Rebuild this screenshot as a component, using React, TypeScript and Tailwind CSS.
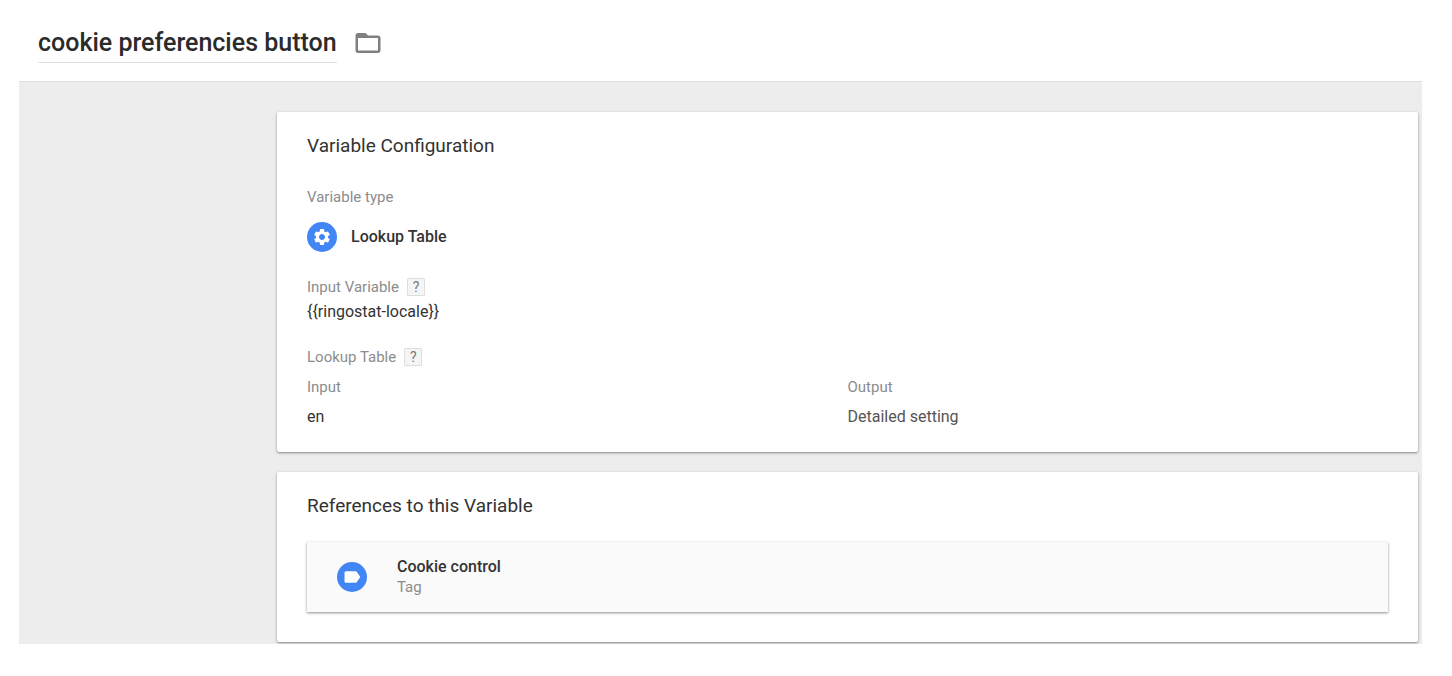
import type { ReactNode } from "react";
import { MdFolderOpen, MdLabel, MdSettings } from "react-icons/md";

type CardProps = {
	title: string;
	children: ReactNode;
};

function Card({ title, children }: CardProps) {
	return (
		<section className="rounded-xs bg-white px-[30px] pt-6 pb-[25px] shadow-[0_1px_2px_rgba(0,0,0,0.35),0_1px_4px_rgba(0,0,0,0.12)]">
			<h2 className="text-[19px] leading-5 text-[#333]">{title}</h2>
			{children}
		</section>
	);
}

function Label({ children }: { children: ReactNode }) {
	return <div className="text-[15px] leading-5 text-[#8c8c8c]">{children}</div>;
}

function HelpButton({ topic }: { topic: string }) {
	return (
		<button
			type="button"
			aria-label={`Help: ${topic}`}
			className="h-[18px] w-[18px] rounded-[1px] border border-[#dedede] bg-[#f5f5f5] text-center text-sm leading-4 text-[#777]"
		>
			?
		</button>
	);
}

function RoundIcon({ children }: { children: ReactNode }) {
	return (
		<span className="flex h-[30px] w-[30px] shrink-0 items-center justify-center rounded-full bg-[#4285f4] text-white">
			{children}
		</span>
	);
}

const rows = [{ input: "en", output: "Detailed setting" }];

function LookupTable() {
	return (
		<table className="mt-2.5 w-full table-fixed text-left">
			<thead className="text-[15px] leading-5 text-[#8c8c8c]">
				<tr>
					<th className="w-1/2 p-0 font-normal">Input</th>
					<th className="w-1/2 p-0 font-normal">Output</th>
				</tr>
			</thead>
			<tbody className="text-base leading-5">
				{rows.map((row) => (
					<tr key={row.input}>
						<td className="p-0 pt-2.5 text-[#333]">{row.input}</td>
						<td className="p-0 pt-2.5 text-[#555]">{row.output}</td>
					</tr>
				))}
			</tbody>
		</table>
	);
}

export default function App() {
	return (
		<div className="bg-white pr-[30px] pb-8 pl-[19px] font-[Roboto,sans-serif]">
			<header className="flex h-[81px] items-start pt-7 pl-[19px]">
				<h1 className="border-b border-[#e0e0e0] pb-1 text-[25px] leading-[30px] font-medium text-[#2b2b2b]">
					cookie preferencies button
				</h1>
				<button type="button" aria-label="Choose folder" className="ml-4 text-[#808080]">
					<MdFolderOpen size={30} />
				</button>
			</header>
			<main className="flex flex-col gap-5 overflow-hidden border-t border-[#e0e0e0] bg-[#ededed] pt-[30px] pr-1 pb-0.5 pl-[258px]">
				<Card title="Variable Configuration">
					<div className="mt-[31px]">
						<Label>Variable type</Label>
						<div className="mt-[15px] flex items-center gap-3.5">
							<RoundIcon>
								<MdSettings size={20} />
							</RoundIcon>
							<span className="text-base leading-5 font-medium text-[#333]">Lookup Table</span>
						</div>
					</div>
					<div className="mt-[25px]">
						<div className="flex items-center gap-2">
							<Label>Input Variable</Label>
							<HelpButton topic="Input Variable" />
						</div>
						<p className="mt-[5px] text-base leading-5 text-[#333]">{"{{ringostat-locale}}"}</p>
					</div>
					<div className="mt-[25px]">
						<div className="flex items-center gap-2">
							<Label>Lookup Table</Label>
							<HelpButton topic="Lookup Table" />
						</div>
						<LookupTable />
					</div>
				</Card>
				<Card title="References to this Variable">
					<a
						href="#tag"
						className="mt-[26px] mb-[5px] flex h-[70px] items-center gap-[30px] bg-[#fafafa] px-[30px] shadow-[0_1px_2px_rgba(0,0,0,0.35),0_1px_4px_rgba(0,0,0,0.12)]"
					>
						<RoundIcon>
							<MdLabel size={20} />
						</RoundIcon>
						<div>
							<div className="text-base leading-5 font-medium text-[#333]">Cookie control</div>
							<Label>Tag</Label>
						</div>
					</a>
				</Card>
			</main>
		</div>
	);
}
